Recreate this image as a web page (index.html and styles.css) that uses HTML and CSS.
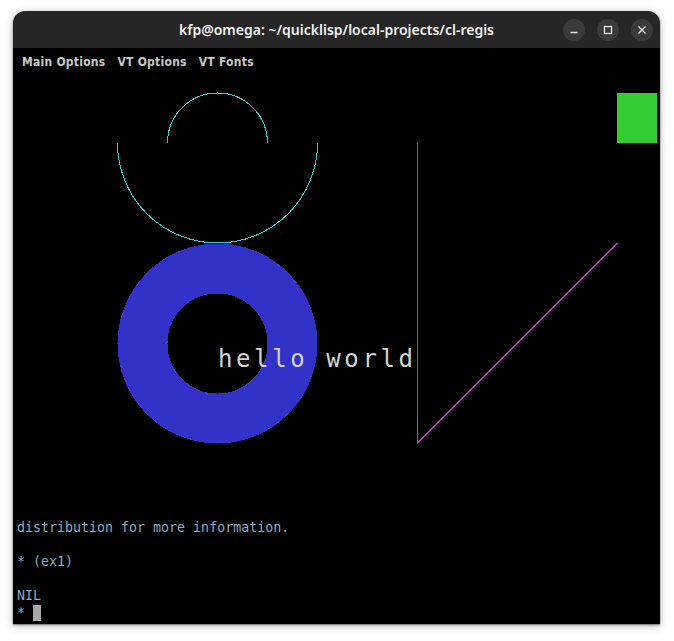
FILE: index.html
```html
<!DOCTYPE html>
<html>
<head>
<meta charset="utf-8">
<title>cl-regis</title>
<link rel="stylesheet" href="styles.css">
</head>
<body>
<div class="window">
  <div class="titlebar">
    <div class="spacer"></div>
    <div class="title">kfp@omega: ~/quicklisp/local-projects/cl-regis</div>
    <div class="controls">
      <span class="btn"><svg width="10" height="10" viewBox="0 0 10 10"><path d="M1.5 7.5h7" stroke="#e6e6e6" stroke-width="1.4" fill="none"/></svg></span>
      <span class="btn"><svg width="10" height="10" viewBox="0 0 10 10"><rect x="1.5" y="1.5" width="7" height="7" stroke="#e6e6e6" stroke-width="1.3" fill="none"/></svg></span>
      <span class="btn"><svg width="10" height="10" viewBox="0 0 10 10"><path d="M1.5 1.5l7 7M8.5 1.5l-7 7" stroke="#e6e6e6" stroke-width="1.4" fill="none"/></svg></span>
    </div>
  </div>
  <div class="term">
    <div class="menu"><span>Main Options</span><span>VT Options</span><span>VT Fonts</span></div>
    <svg class="canvas" width="647" height="430" viewBox="13 80 647 430" shape-rendering="crispEdges">
      <path d="M167.5 143 A50 50 0 0 1 267.5 143" class="cyan"/>
      <path d="M117.5 143 A100 100 0 0 0 317.5 143" class="cyan"/>
      <circle cx="217.5" cy="343.5" r="75" class="donut"/>
      <rect x="617" y="93" width="40" height="50" class="green"/>
      <path d="M417.5 143 V443 L617.5 243" class="magenta"/>
      <text x="218" y="367" class="hello">hello world</text>
    </svg>
    <div class="screen">
      <div class="line">distribution for more information.</div>
      <div class="line"></div>
      <div class="line">* (ex1)</div>
      <div class="line"></div>
      <div class="line">NIL</div>
      <div class="line">* <span class="cursor"></span></div>
    </div>
  </div>
</div>
</body>
</html>
```
FILE: styles.css
```css
html, body {
  margin: 0;
  padding: 0;
  background: #ffffff;
}
body {
  width: 674px;
  height: 641px;
  overflow: hidden;
}
.window {
  margin: 11px 0 0 13px;
  width: 647px;
  height: 613px;
  border-radius: 12px 12px 0 0;
  overflow: hidden;
  box-shadow: 0 1px 2px rgba(0,0,0,0.5), 0 2px 10px rgba(0,0,0,0.25);
  display: flex;
  flex-direction: column;
}
.titlebar {
  height: 37px;
  flex: none;
  background: #262626;
  display: grid;
  grid-template-columns: 1fr auto 1fr;
  align-items: center;
}
.title {
  font-family: "Noto Sans", "DejaVu Sans", sans-serif;
  font-weight: 600;
  font-size: 14px;
  color: #f2f2f2;
  white-space: nowrap;
}
.controls {
  display: flex;
  justify-content: flex-end;
  gap: 12px;
  padding-right: 7px;
}
.btn {
  width: 22px;
  height: 22px;
  border-radius: 50%;
  background: #3a3a3a;
  display: flex;
  align-items: center;
  justify-content: center;
}
.btn svg { display: block; }
.term {
  flex: 1;
  min-height: 0;
  background: #000000;
  display: flex;
  flex-direction: column;
}
.menu {
  height: 32px;
  flex: none;
  box-sizing: border-box;
  padding: 7px 0 0 9px;
  display: flex;
  gap: 12px;
  font-family: "DejaVu Sans Condensed", "DejaVu Sans", sans-serif;
  font-stretch: condensed;
  font-weight: bold;
  font-size: 12px;
  line-height: 14px;
  letter-spacing: 0.25px;
  color: #c8c8c8;
}
.canvas {
  display: block;
  flex: none;
}
.cyan { fill: none; stroke: #33cccc; stroke-width: 1; }
.magenta { fill: none; stroke: #cc33cc; stroke-width: 1; }
.donut { fill: none; stroke: #3232c8; stroke-width: 50; }
.green { fill: #33cc33; }
.hello {
  font-family: "DejaVu Sans Mono", monospace;
  font-size: 24px;
  letter-spacing: 3.6px;
  fill: #d4d4d4;
}
.screen {
  margin-top: auto;
  padding: 0 0 3px 4px;
  font-family: "DejaVu Sans Mono", monospace;
  font-size: 13.3px;
  line-height: 17px;
  color: #8fa8c4;
}
.line {
  height: 17px;
  white-space: pre;
}
.cursor {
  display: inline-block;
  width: 8px;
  height: 16px;
  background: #a8a8a8;
  vertical-align: -4px;
}
```
